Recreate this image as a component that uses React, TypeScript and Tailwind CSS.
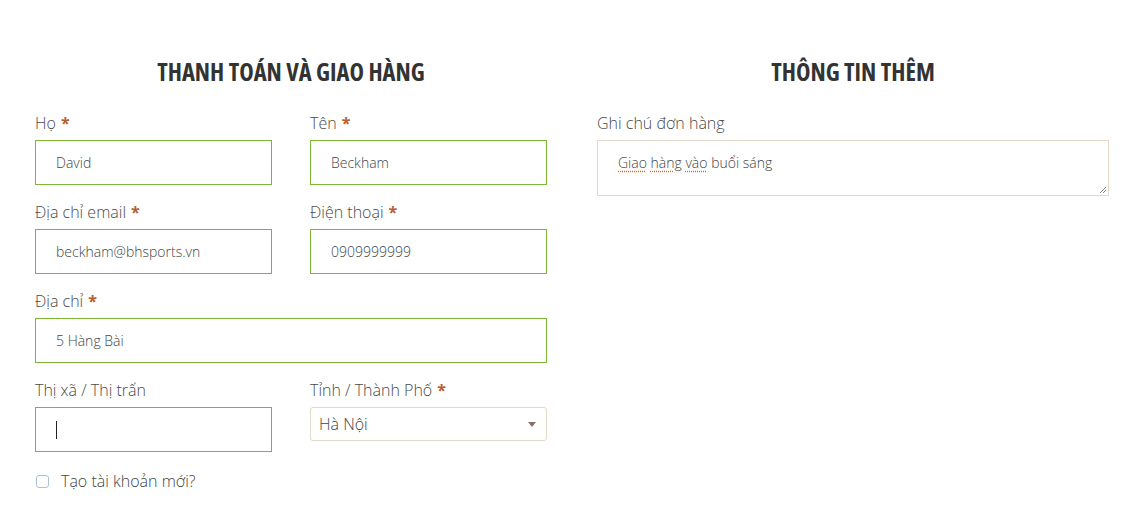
import React from "react";

const font = { fontFamily: '"Open Sans", "Noto Sans", sans-serif' };

function Label({ text, required }: { text: string; required?: boolean }) {
  return (
    <div className="text-[16px] leading-[22px] font-light text-[#4a4a4a] mb-[6px]">
      {text}
      {required && <span className="text-[#b5602e] font-bold ml-[5px]">*</span>}
    </div>
  );
}

function Field({ label, value, required }: { label: string; value: string; required?: boolean }) {
  return (
    <div className="flex-1 mb-[16px]">
      <Label text={label} required={required} />
      <input
        readOnly
        value={value}
        className="block w-full h-[45px] border border-[#7cb632] bg-white px-[20px] text-[14px] font-light text-[#444] outline-none"
        style={font}
      />
    </div>
  );
}

export default function App() {
  return (
    <div className="w-[1142px] h-[518px] bg-white overflow-hidden" style={font}>
      <div className="flex gap-[50px] pl-[35px] pt-[57px]">
        {/* Left column */}
        <div className="w-[512px]">
          <h2
            className="text-center text-[24.5px] leading-[30px] font-bold text-[#333] mb-[25px]"
            style={{ fontStretch: "75%" }}
          >
            THANH TOÁN VÀ GIAO HÀNG
          </h2>
          <div className="flex gap-[38px]">
            <Field label="Họ" value="David" required />
            <Field label="Tên" value="Beckham" required />
          </div>
          <div className="flex gap-[38px]">
            <Field label="Địa chỉ email" value="beckham@bhsports.vn" required />
            <Field label="Điện thoại" value="0909999999" required />
          </div>
          <Field label="Địa chỉ" value="5 Hàng Bài" required />
          <div className="flex gap-[38px]">
            <div className="flex-1">
              <Label text="Thị xã / Thị trấn" />
              <div className="h-[45px] border border-[#7cb632] bg-white px-[20px] flex items-center">
                <span className="block w-px h-[18px] bg-[#222]" />
              </div>
            </div>
            <div className="flex-1">
              <Label text="Tỉnh / Thành Phố" required />
              <div className="h-[34px] border border-[#e3d8ca] rounded-[3px] bg-white pl-[8px] pr-[10px] flex items-center justify-between">
                <span className="text-[16px] font-light text-[#444]">Hà Nội</span>
                <svg width="8" height="5" viewBox="0 0 8 5">
                  <path d="M0 0 L8 0 L4 5 Z" fill="#8a6d6d" />
                </svg>
              </div>
            </div>
          </div>
          <div className="flex items-center mt-[18px] h-[22px]">
            <span className="block w-[13px] h-[13px] border border-[#a9c2d6] rounded-[3px] bg-white ml-[1px]" />
            <span className="ml-[12px] text-[16px] font-light text-[#444]">Tạo tài khoản mới?</span>
          </div>
        </div>

        {/* Right column */}
        <div className="w-[512px]">
          <h2
            className="text-center text-[24.5px] leading-[30px] font-bold text-[#333] mb-[25px]"
            style={{ fontStretch: "75%" }}
          >
            THÔNG TIN THÊM
          </h2>
          <Label text="Ghi chú đơn hàng" />
          <div className="relative h-[56px] border border-[#e3d8ca] bg-white pl-[20px] pt-[12px] text-[14px] leading-[20px] font-light text-[#444]">
            <span className="underline decoration-dotted decoration-[#d9652c] underline-offset-[3px]">Giao</span>{" "}
            <span className="underline decoration-dotted decoration-[#d9652c] underline-offset-[3px]">hàng</span>{" "}
            <span className="underline decoration-dotted decoration-[#d9652c] underline-offset-[3px]">vào</span> buổi sáng
            <svg className="absolute right-[1px] bottom-[1px]" width="8" height="8" viewBox="0 0 8 8">
              <path d="M7 1 L1 7 M7 4 L4 7" stroke="#888" strokeWidth="1" />
            </svg>
          </div>
        </div>
      </div>
    </div>
  );
}
